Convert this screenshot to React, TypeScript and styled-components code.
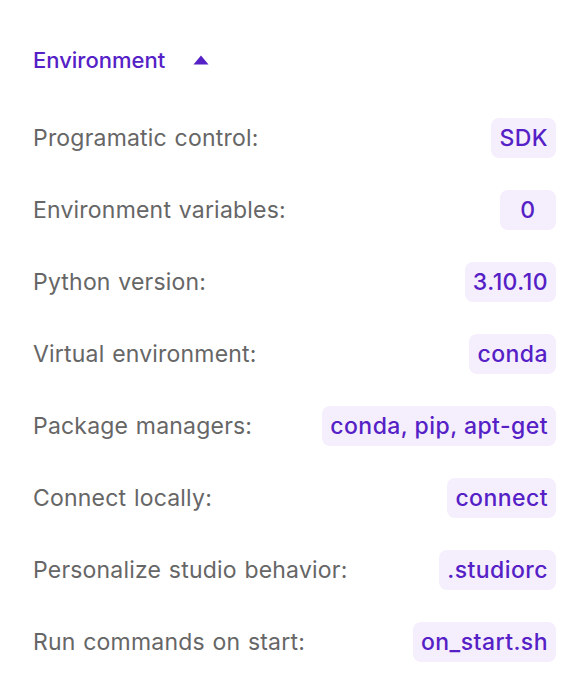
import React from "react";
import styled, { createGlobalStyle } from "styled-components";

const Global = createGlobalStyle`
  html, body { margin: 0; padding: 0; background: #ffffff; }
  body { font-family: Inter, "Noto Sans", sans-serif; -webkit-font-smoothing: antialiased; }
`;

const Panel = styled.div`
  width: 586px;
  box-sizing: border-box;
  padding: 44px 30px 0 33px;
`;

const Header = styled.button`
  display: flex;
  align-items: center;
  gap: 28px;
  background: none;
  border: none;
  padding: 0;
  margin: 0 0 42px;
  font-family: inherit;
  font-size: 22px;
  font-weight: 500;
  color: #5521c6;
  cursor: pointer;
  line-height: 32px;
`;

const Rows = styled.div`
  display: flex;
  flex-direction: column;
  gap: 32px;
`;

const Row = styled.div`
  display: flex;
  align-items: center;
  justify-content: space-between;
  height: 40px;
`;

const Label = styled.span`
  font-size: 23px;
  letter-spacing: 0.2px;
  word-spacing: 1px;
  color: #666666;
  font-weight: 400;
`;

const Badge = styled.span`
  display: inline-flex;
  align-items: center;
  justify-content: center;
  height: 40px;
  padding: 0 8px;
  border-radius: 8px;
  background: #f5effd;
  color: #5521c6;
  font-size: 23px;
  font-weight: 500;
  letter-spacing: 0.45px;
  min-width: 56px;
  box-sizing: border-box;
`;

const rows: [string, string][] = [
  ["Programatic control:", "SDK"],
  ["Environment variables:", "0"],
  ["Python version:", "3.10.10"],
  ["Virtual environment:", "conda"],
  ["Package managers:", "conda, pip, apt-get"],
  ["Connect locally:", "connect"],
  ["Personalize studio behavior:", ".studiorc"],
  ["Run commands on start:", "on_start.sh"],
];

export default function App() {
  return (
    <>
      <Global />
      <Panel>
        <Header>
          Environment
          <svg width="16" height="10" viewBox="0 0 16 10">
            <path d="M8 0.5 L15.5 9.5 L0.5 9.5 Z" fill="#5521c6" />
          </svg>
        </Header>
        <Rows>
          {rows.map(([l, v]) => (
            <Row key={l}>
              <Label>{l}</Label>
              <Badge>{v}</Badge>
            </Row>
          ))}
        </Rows>
      </Panel>
    </>
  );
}
